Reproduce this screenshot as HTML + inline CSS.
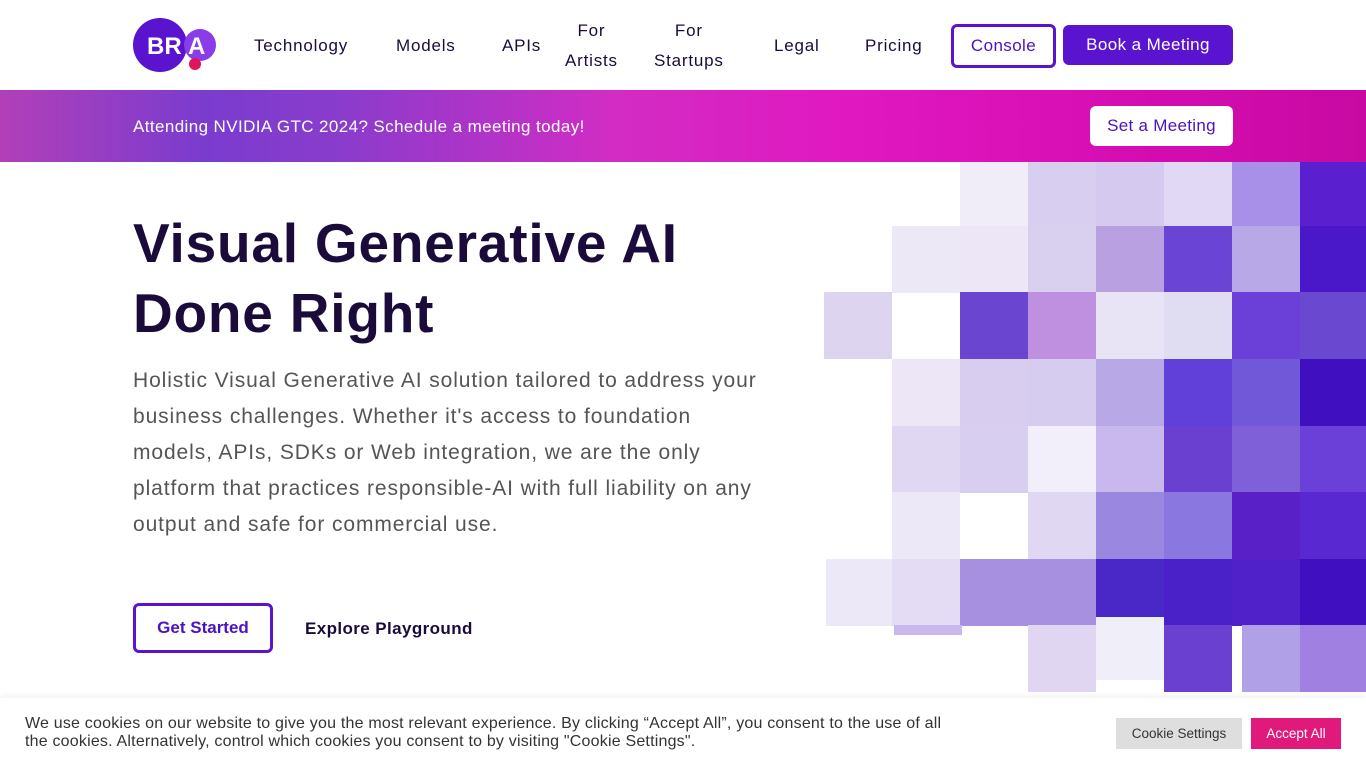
<!DOCTYPE html>
<html><head><meta charset="utf-8"><style>
*{margin:0;padding:0;box-sizing:border-box}
body{width:1366px;height:768px;overflow:hidden;background:#fff;font-family:"Liberation Sans",sans-serif;position:relative;color:#1a0b3b}
.nav{position:absolute;top:0;left:0;width:1366px;height:90px}
.nav a{position:absolute;font-size:17px;color:#1a0b3b;text-align:center;line-height:30px;letter-spacing:.8px}
.banner{position:absolute;top:90px;left:0;width:1366px;height:72px;background:linear-gradient(90deg,#b23fb8 0%,#7a3ccf 15%,#8a3ccc 25%,#d22cc4 45%,#e018c0 62%,#d40cb0 85%,#c80aa2 100%)}
.banner .t{position:absolute;left:133px;top:27px;color:#fff;font-size:17px;letter-spacing:.4px}
.banner .b{position:absolute;left:1090px;top:16px;width:143px;height:40px;background:#fff;border-radius:6px;color:#4a12c0;font-size:17px;text-align:center;line-height:40px;letter-spacing:.3px}
h1{position:absolute;left:133px;top:208px;font-size:55px;line-height:70px;font-weight:bold;color:#1a0b3b;letter-spacing:.8px}
p.d{position:absolute;left:133px;top:363px;font-size:21px;line-height:36px;color:#555;letter-spacing:.9px;white-space:nowrap}
.gs{position:absolute;left:133px;top:603px;width:140px;height:50px;border:3px solid #5a14d0;border-radius:6px;color:#4a12c0;font-size:17px;font-weight:bold;text-align:center;line-height:44px}
.ep{position:absolute;left:305px;top:619px;font-size:17px;font-weight:bold;color:#1a0b3b;letter-spacing:.4px}
.tile{position:absolute;width:68px;height:67px}
.cookie{position:absolute;top:698px;left:0;width:1366px;height:70px;background:#fff;box-shadow:0 -2px 6px rgba(0,0,0,.06)}
.cookie .t{position:absolute;left:25px;top:17px;font-size:16px;line-height:18px;color:#333;white-space:nowrap;letter-spacing:.2px}
.cs{position:absolute;left:1116px;top:20px;width:126px;height:31px;background:#dedede;color:#333;font-size:13.5px;text-align:center;line-height:31px}
.aa{position:absolute;left:1251px;top:20px;width:90px;height:31px;background:#e0197a;color:#fff;font-size:13.5px;text-align:center;line-height:31px}
</style></head><body>
<div class="nav">
<svg style="position:absolute;left:133px;top:18px" width="84" height="54" viewBox="0 0 84 54">
<circle cx="27" cy="27" r="27" fill="#5a14d0"/>
<circle cx="67" cy="27" r="16" fill="#8a3ce8"/>
<circle cx="62" cy="46" r="6" fill="#e0145a"/>
<text x="14" y="36" fill="#fff" font-family="Liberation Sans" font-weight="bold" font-size="24">BR</text>
<text x="55" y="36" fill="#fff" font-family="Liberation Sans" font-weight="bold" font-size="24">A</text>
</svg>
<a style="left:254px;top:31px">Technology</a>
<a style="left:396px;top:31px">Models</a>
<a style="left:502px;top:31px">APIs</a>
<a style="left:565px;top:16px">For<br>Artists</a>
<a style="left:654px;top:16px">For<br>Startups</a>
<a style="left:774px;top:31px">Legal</a>
<a style="left:865px;top:31px">Pricing</a>
<div style="position:absolute;left:951px;top:24px;width:105px;height:44px;border:3px solid #5a14d0;border-radius:6px;color:#4a12c0;font-size:17px;text-align:center;line-height:38px;letter-spacing:.4px">Console</div>
<div style="position:absolute;left:1063px;top:25px;width:170px;height:40px;background:#5a14d0;border-radius:6px;color:#fff;font-size:17px;text-align:center;line-height:40px;letter-spacing:.4px">Book a Meeting</div>
</div>
<div class="banner"><div class="t">Attending NVIDIA GTC 2024? Schedule a meeting today!</div><div class="b">Set a Meeting</div></div>
<h1>Visual Generative AI<br>Done Right</h1>
<p class="d">Holistic Visual Generative AI solution tailored to address your<br>business challenges. Whether it's access to foundation<br>models, APIs, SDKs or Web integration, we are the only<br>platform that practices responsible-AI with full liability on any<br>output and safe for commercial use.</p>
<div class="gs">Get Started</div>
<div class="ep">Explore Playground</div>
<div style="position:absolute;left:824px;top:162px;width:542px;height:528px">
<div class="tile" style="left:136px;top:0;background:#f0ecf8"></div>
<div class="tile" style="left:204px;top:0;background:#d8cff0"></div>
<div class="tile" style="left:272px;top:0;background:#d5c9ef"></div>
<div class="tile" style="left:340px;top:0;background:#e0d8f5"></div>
<div class="tile" style="left:408px;top:0;background:#a890e8"></div>
<div class="tile" style="left:476px;top:0;background:#5a20d0"></div>
<div class="tile" style="left:68px;top:64px;background:#ede8f5"></div>
<div class="tile" style="left:136px;top:64px;background:#ece6f6"></div>
<div class="tile" style="left:204px;top:64px;background:#d8d0ee"></div>
<div class="tile" style="left:272px;top:64px;background:#b9a0e0"></div>
<div class="tile" style="left:340px;top:64px;background:#6a45d5"></div>
<div class="tile" style="left:408px;top:64px;background:#b8a8e8"></div>
<div class="tile" style="left:476px;top:64px;background:#4a18c8"></div>
<div class="tile" style="left:0;top:130px;background:#ddd5f0"></div>
<div class="tile" style="left:136px;top:130px;background:#6a45d0"></div>
<div class="tile" style="left:204px;top:130px;background:#c090e0"></div>
<div class="tile" style="left:272px;top:130px;background:#e8e4f6"></div>
<div class="tile" style="left:340px;top:130px;background:#e0dcf2"></div>
<div class="tile" style="left:408px;top:130px;background:#6a40d8"></div>
<div class="tile" style="left:476px;top:130px;background:#6a48d0"></div>
<div class="tile" style="left:68px;top:197px;background:#ece6f6"></div>
<div class="tile" style="left:136px;top:197px;background:#d8ccef"></div>
<div class="tile" style="left:204px;top:197px;background:#d6ccf0"></div>
<div class="tile" style="left:272px;top:197px;background:#b8a8e6"></div>
<div class="tile" style="left:340px;top:197px;background:#6040d8"></div>
<div class="tile" style="left:408px;top:197px;background:#7058d8"></div>
<div class="tile" style="left:476px;top:197px;background:#4010c0"></div>
<div class="tile" style="left:68px;top:264px;background:#e0d8f2"></div>
<div class="tile" style="left:136px;top:264px;background:#d8cef0"></div>
<div class="tile" style="left:204px;top:264px;background:#f2eefa"></div>
<div class="tile" style="left:272px;top:264px;background:#c8b8ee"></div>
<div class="tile" style="left:340px;top:264px;background:#6a40d0"></div>
<div class="tile" style="left:408px;top:264px;background:#8060d8"></div>
<div class="tile" style="left:476px;top:264px;background:#6a40d8"></div>
<div class="tile" style="left:68px;top:330px;background:#ece8f8"></div>
<div class="tile" style="left:204px;top:330px;background:#e0d8f2"></div>
<div class="tile" style="left:272px;top:330px;background:#9a88e0"></div>
<div class="tile" style="left:340px;top:330px;background:#8a78e0"></div>
<div class="tile" style="left:408px;top:330px;background:#5a20c8"></div>
<div class="tile" style="left:476px;top:330px;background:#5a28d0"></div>
<div class="tile" style="left:2px;top:397px;background:#ece8f8"></div>
<div class="tile" style="left:68px;top:397px;background:#e4dcf4"></div>
<div class="tile" style="left:136px;top:397px;background:#a890e0"></div>
<div class="tile" style="left:204px;top:397px;background:#a890e0"></div>
<div class="tile" style="left:272px;top:397px;background:#4a28c8"></div>
<div class="tile" style="left:340px;top:397px;background:#4a20c8"></div>
<div class="tile" style="left:408px;top:397px;background:#5020c8"></div>
<div class="tile" style="left:476px;top:397px;background:#4010c0"></div>
<div class="tile" style="left:70px;top:463px;height:10px;background:#c8b8ee"></div>
<div class="tile" style="left:204px;top:463px;background:#e0d6f2"></div>
<div class="tile" style="left:272px;top:455px;height:63px;background:#f0eef8"></div>
<div class="tile" style="left:340px;top:463px;background:#6a40d0"></div>
<div class="tile" style="left:418px;top:463px;background:#b0a0e8"></div>
<div class="tile" style="left:476px;top:463px;background:#a080e0"></div>
</div>
<div class="cookie"><div class="t">We use cookies on our website to give you the most relevant experience. By clicking “Accept All”, you consent to the use of all<br>the cookies. Alternatively, control which cookies you consent to by visiting "Cookie Settings".</div><div class="cs">Cookie Settings</div><div class="aa">Accept All</div></div>
</body></html>
